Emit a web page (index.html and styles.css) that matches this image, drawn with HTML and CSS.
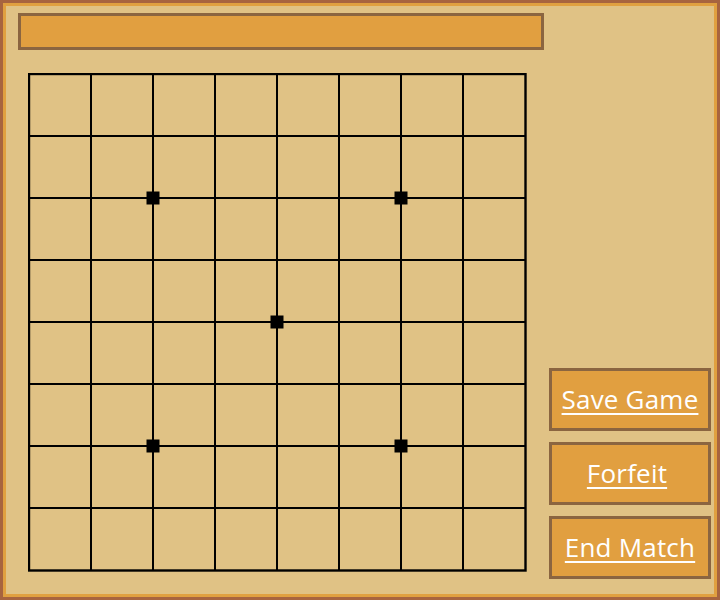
FILE: index.html
```html
<!DOCTYPE html>
<html>
<head>
<meta charset="utf-8">
<link rel="stylesheet" href="styles.css">
</head>
<body>
<div class="frame">
  <div class="inner">
    <div class="main">
      <div class="title-bar"></div>
      <svg class="board" width="500" height="500" viewBox="0 0 500 500">
        <g stroke="#000" stroke-width="2">
          <line x1="63" y1="0" x2="63" y2="498"/>
          <line x1="125" y1="0" x2="125" y2="498"/>
          <line x1="187" y1="0" x2="187" y2="498"/>
          <line x1="249" y1="0" x2="249" y2="498"/>
          <line x1="311" y1="0" x2="311" y2="498"/>
          <line x1="373" y1="0" x2="373" y2="498"/>
          <line x1="435" y1="0" x2="435" y2="498"/>
          <line x1="0" y1="63" x2="498" y2="63"/>
          <line x1="0" y1="125" x2="498" y2="125"/>
          <line x1="0" y1="187" x2="498" y2="187"/>
          <line x1="0" y1="249" x2="498" y2="249"/>
          <line x1="0" y1="311" x2="498" y2="311"/>
          <line x1="0" y1="373" x2="498" y2="373"/>
          <line x1="0" y1="435" x2="498" y2="435"/>
        </g>
        <rect x="1" y="1" width="496.5" height="496.5" fill="none" stroke="#000" stroke-width="2.4"/>
        <g fill="#000">
          <rect x="118.5" y="118.5" width="13" height="13"/>
          <rect x="366.5" y="118.5" width="13" height="13"/>
          <rect x="242.5" y="242.5" width="13" height="13"/>
          <rect x="118.5" y="366.5" width="13" height="13"/>
          <rect x="366.5" y="366.5" width="13" height="13"/>
        </g>
      </svg>
    </div>
    <div class="side">
      <a class="btn" href="#">Save Game</a>
      <a class="btn btn-mid" href="#">Forfeit</a>
      <a class="btn" href="#">End Match</a>
    </div>
  </div>
</div>
</body>
</html>
```

FILE: styles.css
```css
html, body {
  margin: 0;
  padding: 0;
  background: #ffffff;
}
.frame {
  width: 720px;
  height: 600px;
  box-sizing: border-box;
  border: 3px solid #a7643f;
  background: #e0a040;
}
.inner {
  box-sizing: border-box;
  height: 594px;
  margin: 0;
  border: 3px solid #e0a040;
  background: #e0c285;
  display: flex;
  padding: 7px 3px 15px 12px;
}
.main {
  display: flex;
  flex-direction: column;
  width: 526px;
}
.title-bar {
  box-sizing: border-box;
  width: 526px;
  height: 37px;
  background: #e19f40;
  border: 3px solid #8b6540;
}
.board {
  display: block;
  margin-top: 23px;
  margin-left: 10px;
}
.side {
  flex: 1;
  display: flex;
  flex-direction: column;
  justify-content: flex-end;
  align-items: flex-end;
  gap: 11px;
}
.btn {
  box-sizing: border-box;
  width: 162px;
  height: 63px;
  background: #e19f40;
  border: 3px solid #8b6540;
  color: #ffffff;
  font-family: "Open Sans", "Noto Sans", sans-serif;
  font-size: 26px;
  letter-spacing: 0.2px;
  text-decoration: underline;
  text-decoration-thickness: 2px;
  text-underline-offset: 4px;
  display: flex;
  align-items: center;
  justify-content: center;
  padding-bottom: 2px;
}
.btn-mid {
  padding-right: 6px;
}
```
